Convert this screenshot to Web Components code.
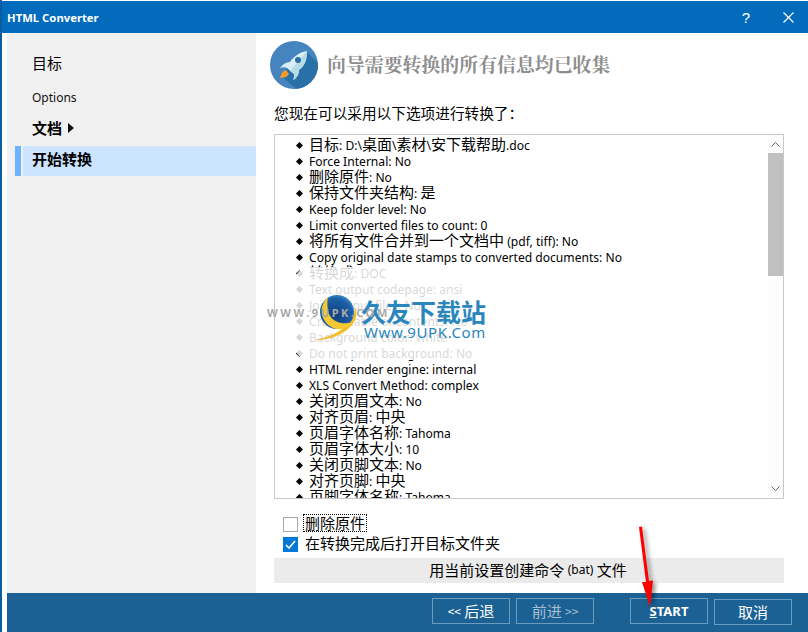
<!DOCTYPE html>
<html>
<head>
<meta charset="utf-8">
<title>HTML Converter</title>
<style>
html, body { margin: 0; padding: 0; background: #fff; }
body { width: 808px; height: 632px; overflow: hidden; font-family: "Liberation Sans", "Noto Sans CJK SC", sans-serif; }
</style>
</head>
<body>
<converter-window></converter-window>

<script>
/* Small helper: every component is a template plus a shadow root */
function defineComp(name, html, setup) {
    const template = document.createElement('template');
    template.innerHTML = html;
    customElements.define(name, class extends HTMLElement {
        constructor() {
            super();
            this.attachShadow({ mode: 'open' }).append(template.content.cloneNode(true));
            if (setup) setup(this);
        }
    });
}

const LATIN = '"Noto Sans", "Noto Sans CJK SC", sans-serif';

// Title bar
defineComp('title-bar', `
    <style>
    :host { display: flex; align-items: center; height: 32px; margin-top: 1px; background: #026bbb; color: #fff; }
    #name { flex: 1; padding-left: 5px; font: bold 11.3px ${LATIN}; }
    #help { width: 14px; font: 15px "Liberation Sans", sans-serif; margin-right: 30px; text-align: center; }
    svg { margin-right: 14px; }
    </style>
    <div id="name">HTML Converter</div>
    <div id="help">?</div>
    <svg width="11" height="11" viewBox="0 0 11 11"><path d="M.5.5l10 10M10.5.5l-10 10" stroke="#fff" stroke-width="1.2" fill="none"/></svg>
`);

// Left navigation item
defineComp('nav-item', `
    <style>
    :host { display: flex; align-items: center; box-sizing: border-box; height: 30px; padding: 0 0 3px 17px; margin-left: 8px; font: 15px "Noto Sans CJK SC", sans-serif; color: #000; }
    :host([small]) { font: 12px ${LATIN}; color: #111; padding-bottom: 2px; }
    :host([strong]) { font-weight: bold; }
    :host([active]) { background: #cce4ff; margin-left: 16px; padding: 0 0 5px 9px; box-shadow: -2px 0 0 #f0f0f0, -8px 0 0 #6cb4ff; }
    svg { margin-left: 6px; }
    </style>
    <slot></slot>
    <slot name="after"></slot>
`);

// Left navigation column
defineComp('side-nav', `
    <style>
    :host { display: block; width: 249px; padding-top: 16px; box-sizing: border-box; background: #f0f0f0; }
    </style>
    <nav-item>目标</nav-item>
    <nav-item small style="margin-top:4px">Options</nav-item>
    <nav-item strong style="margin-top:1px">文档<svg slot="after" width="6" height="10" viewBox="0 0 6 10" style="margin-left:6px"><path d="M0 0l6 5-6 5z" fill="#111"/></svg></nav-item>
    <nav-item strong active style="margin-top:2px">开始转换</nav-item>
`);

// Rocket badge and heading
defineComp('wizard-head', `
    <style>
    :host { display: flex; align-items: center; gap: 9px; height: 48px; }
    #text { font: bold 18.9px "Noto Serif CJK SC", "Noto Sans CJK SC", sans-serif; color: #8d8d8d; white-space: nowrap; padding-bottom: 4px; }
    </style>
    <svg width="48" height="48" viewBox="0 0 48 48">
        <defs><clipPath id="c"><circle cx="24" cy="24" r="24"/></clipPath></defs>
        <circle cx="24" cy="24" r="24" fill="#4684bf"/>
        <path clip-path="url(#c)" d="M37 11L50 24V50H29L10 34z" fill="#2a70a8"/>
        <path d="M10 37c1-5 3-7 6-8l3 4c-2 3-5 4-9 4z" fill="#f29a2e"/>
        <path d="M37 10c-7 1-13 5-17 11-4 0-7 2-10 6 3-1 5-1 7 0l7 6c0 2 0 5-1 6 4-2 6-6 6-10 6-4 8-11 8-19z" fill="#d8eef5"/>
        <path d="M37 10c0 8-2 15-8 19 0 4-2 8-6 10 1-1 1-4 1-6l-4-3z" fill="#b5dbe8"/>
        <circle cx="28" cy="19" r="3" fill="#2a70a8"/>
    </svg>
    <div id="text"><slot></slot></div>
`);

// One bullet row: CJK and latin runs are passed as slotted text
defineComp('summary-row', `
    <style>
    :host { display: flex; align-items: center; height: 16px; white-space: nowrap; color: #000; font: 12.1px/16px ${LATIN}; }
    i { width: 5px; height: 5px; margin: 1px 7.5px 0 21.5px; background: #000; transform: rotate(45deg); flex: none; }
    </style>
    <i></i><span><slot></slot></span>
`);

// Scrollbar on the right of the summary
defineComp('scroll-bar', `
    <style>
    :host { display: flex; flex-direction: column; align-items: stretch; width: 15px; height: 100%; background: #fdfdfd; }
    .btn { height: 18px; display: flex; align-items: center; justify-content: center; flex: none; }
    #thumb { height: 123px; background: #c0c0c0; flex: none; }
    #rest { flex: 1; }
    </style>
    <div class="btn"><svg width="9" height="5" viewBox="0 0 9 5"><path d="M.5 4.5l4-4 4 4" fill="none" stroke="#666"/></svg></div>
    <div id="thumb"></div>
    <div id="rest"></div>
    <div class="btn" style="height:20px"><svg width="9" height="5" viewBox="0 0 9 5"><path d="M.5.5l4 4 4-4" fill="none" stroke="#666"/></svg></div>
`);

// Faded site stamp lying over the summary list
defineComp('site-stamp', `
    <style>
    :host { position: absolute; left: 295px; top: 267px; width: 215px; height: 93px; pointer-events: none; }
    #fade { position: absolute; left: 0; top: 0; width: 215px; height: 93px; background: rgba(255,255,255,.84); border-radius: 14px; }
    #url { position: absolute; left: -28px; top: 38px; font: bold 11px ${LATIN}; letter-spacing: 2.6px; color: #a9a9a9; white-space: nowrap; }
    #cn { position: absolute; left: 66px; top: 27px; font: bold 25px/34px "Noto Sans CJK SC", sans-serif; color: #2a86bd; white-space: nowrap; }
    #en { position: absolute; left: 69px; top: 55px; font: 15px/20px ${LATIN}; color: #2a86bd; letter-spacing: .6px; white-space: nowrap; }
    svg { position: absolute; left: 20px; top: 26px; }
    </style>
    <div id="fade"></div>
    <svg width="44" height="48" viewBox="0 0 44 48">
        <defs><radialGradient id="g" cx=".45" cy=".6" r=".7"><stop offset="0" stop-color="#0f3f7c"/><stop offset=".7" stop-color="#1c5fa8"/><stop offset="1" stop-color="#4aa6de"/></radialGradient></defs>
        <path d="M0 47c16 1 38-9 41-23 1-4 0-8-1-10 0 14-14 28-40 33z" fill="#f3bd2a"/>
        <circle cx="22" cy="19" r="17" fill="url(#g)"/>
        <path d="M13 4C4 12 4 28 18 35c8 3 16 0 19-6-8 3-19 1-23-8-2-6-2-11-1-17z" fill="#f4c832"/>
    </svg>
    <div id="cn">久友下载站</div>
    <div id="en">Www.9UPK.Com</div>
    <div id="url">WWW.9UPK.COM</div>
`);

// Summary list box
defineComp('summary-box', `
    <style>
    :host { display: flex; position: relative; height: 365px; border: 1px solid #c8c8c8; box-sizing: border-box; overflow: hidden; }
    #rows { flex: 1; padding-top: 2px; overflow: hidden; }
    </style>
    <div id="rows"></div>
    <scroll-bar></scroll-bar>
`, (el) => {
    const rows = [
        ['目标', ': D:\\', '桌面', '\\', '素材', '\\', '安下载帮助', '.doc'],
        ['', 'Force Internal: No'],
        ['删除原件', ': No'],
        ['保持文件夹结构', ': ', '是'],
        ['', 'Keep folder level: No'],
        ['', 'Limit converted files to count: 0'],
        ['将所有文件合并到一个文档中', ' (pdf, tiff): No'],
        ['', 'Copy original date stamps to converted documents: No'],
        ['转换成', ': DOC'],
        ['', 'Text output codepage: ansi'],
        ['', 'Join output files: No'],
        ['', 'Create table of contents: No'],
        ['', 'Background color: white'],
        ['', 'Do not print background: No'],
        ['', 'HTML render engine: internal'],
        ['', 'XLS Convert Method: complex'],
        ['关闭页眉文本', ': No'],
        ['对齐页眉', ': ', '中央'],
        ['页眉字体名称', ': Tahoma'],
        ['页眉字体大小', ': 10'],
        ['关闭页脚文本', ': No'],
        ['对齐页脚', ': ', '中央'],
        ['页脚字体名称', ': Tahoma']
    ];
    const box = el.shadowRoot.querySelector('#rows');
    rows.forEach(parts => {
        const row = document.createElement('summary-row');
        // odd parts are latin, even parts are CJK
        parts.forEach((p, i) => {
            const s = document.createElement('span');
            if (i % 2 == 0) s.style.cssText = 'font:15px/16px "Noto Sans CJK SC",sans-serif';
            s.textContent = p;
            row.append(s);
        });
        box.append(row);
    });
});

// Checkbox with label
defineComp('check-line', `
    <style>
    :host { display: flex; align-items: center; height: 20px; font: 15px "Noto Sans CJK SC", sans-serif; color: #000; }
    #box { width: 13px; height: 13px; border: 1px solid #a8a8a8; margin-right: 5px; display: flex; background: #fff; flex: none; }
    :host([checked]) #box { background: #0078d7; border-color: #0078d7; }
    svg { display: none; }
    :host([checked]) svg { display: block; }
    #label { padding: 0 1px; border: 1px dotted transparent; line-height: 16px; margin-top: -2px; }
    :host([focus]) #label { border-color: #000; }
    </style>
    <div id="box"><svg width="13" height="13" viewBox="0 0 13 13"><path d="M2 7l3 3 6-7" fill="none" stroke="#fff" stroke-width="1.7"/></svg></div>
    <div id="label"><slot></slot></div>
`);

// Wide flat button under the list
defineComp('flat-button', `
    <style>
    :host { display: flex; align-items: center; justify-content: center; box-sizing: border-box; height: 25px; background: #ebebeb; color: #000; font: 15px/20px "Noto Sans CJK SC", sans-serif; padding: 0 2px 2px 0; }
    ::slotted(span) { font: 12px/20px ${LATIN}; }
    </style>
    <slot></slot>
`);

// Footer button
defineComp('foot-button', `
    <style>
    :host { display: flex; align-items: center; justify-content: center; box-sizing: border-box; width: 78px; height: 26px; border: 1px solid #6b9cbf; color: #fff; font: 15px/20px "Noto Sans CJK SC", sans-serif; }
    :host([disabled]) { color: #a9bfd0; }
    :host([bold]) { font: bold 13px ${LATIN}; }
    ::slotted(span) { font-size: 12px; }
    </style>
    <slot></slot>
`);

// Right hand page
defineComp('finish-page', `
    <style>
    :host { display: block; flex: 1; background: #fff; padding: 8px 24px 0 18px; box-sizing: border-box; }
    wizard-head { margin-left: -4px; }
    #intro { margin: 14px 0 11px 0; height: 20px; font: 14.67px/20px "Noto Sans CJK SC", sans-serif; color: #000; }
    #checks { padding: 15px 0 0 9px; }
    flat-button { margin-top: 4px; }
    </style>
    <wizard-head>向导需要转换的所有信息均已收集</wizard-head>
    <div id="intro">您现在可以采用以下选项进行转换了：</div>
    <summary-box></summary-box>
    <div id="checks">
        <check-line focus>删除原件</check-line>
        <check-line checked>在转换完成后打开目标文件夹</check-line>
    </div>
    <flat-button>用当前设置创建命令&nbsp;<span>(bat)</span>&nbsp;文件</flat-button>
`);

// Footer bar with the navigation buttons
defineComp('foot-bar', `
    <style>
    :host { display: flex; align-items: flex-start; gap: 6px; height: 39px; background: #1b6194; padding: 5px 16px 0 425px; box-sizing: border-box; }
    #gap { width: 24px; }
    </style>
    <foot-button><span>&lt;&lt;</span>&nbsp;后退</foot-button>
    <foot-button disabled>前进&nbsp;<span>&gt;&gt;</span></foot-button>
    <div id="gap"></div>
    <foot-button bold><span style="text-decoration:underline;font-size:13px">S</span>TART</foot-button>
    <foot-button style="margin-top:1px">取消</foot-button>
`);

// Whole dialog, stamp and red arrow lie over it
defineComp('converter-window', `
    <style>
    :host { display: block; position: relative; width: 808px; height: 632px; overflow: hidden; background: #fff; }
    #frame { display: flex; flex-direction: column; height: 632px; border-left: 2px solid #0a5da0; box-sizing: border-box; }
    #main { display: flex; flex: 1; padding-left: 5px; min-height: 0; }
    #foot { padding-left: 5px; }
    #arrow { position: absolute; left: 630px; top: 520px; filter: drop-shadow(3px 2px 2px rgba(0,0,0,.4)); }
    </style>
    <div id="frame">
        <title-bar></title-bar>
        <div id="main"><side-nav></side-nav><finish-page></finish-page></div>
        <div id="foot"><foot-bar></foot-bar></div>
    </div>
    <site-stamp></site-stamp>
    <svg id="arrow" width="40" height="100" viewBox="0 0 40 100">
        <path d="M9 7L12 6.5 19 61 23 60.5 20 87 12 62 16 62z" fill="#f00"/>
    </svg>
`);
</script>
</body>
</html>
